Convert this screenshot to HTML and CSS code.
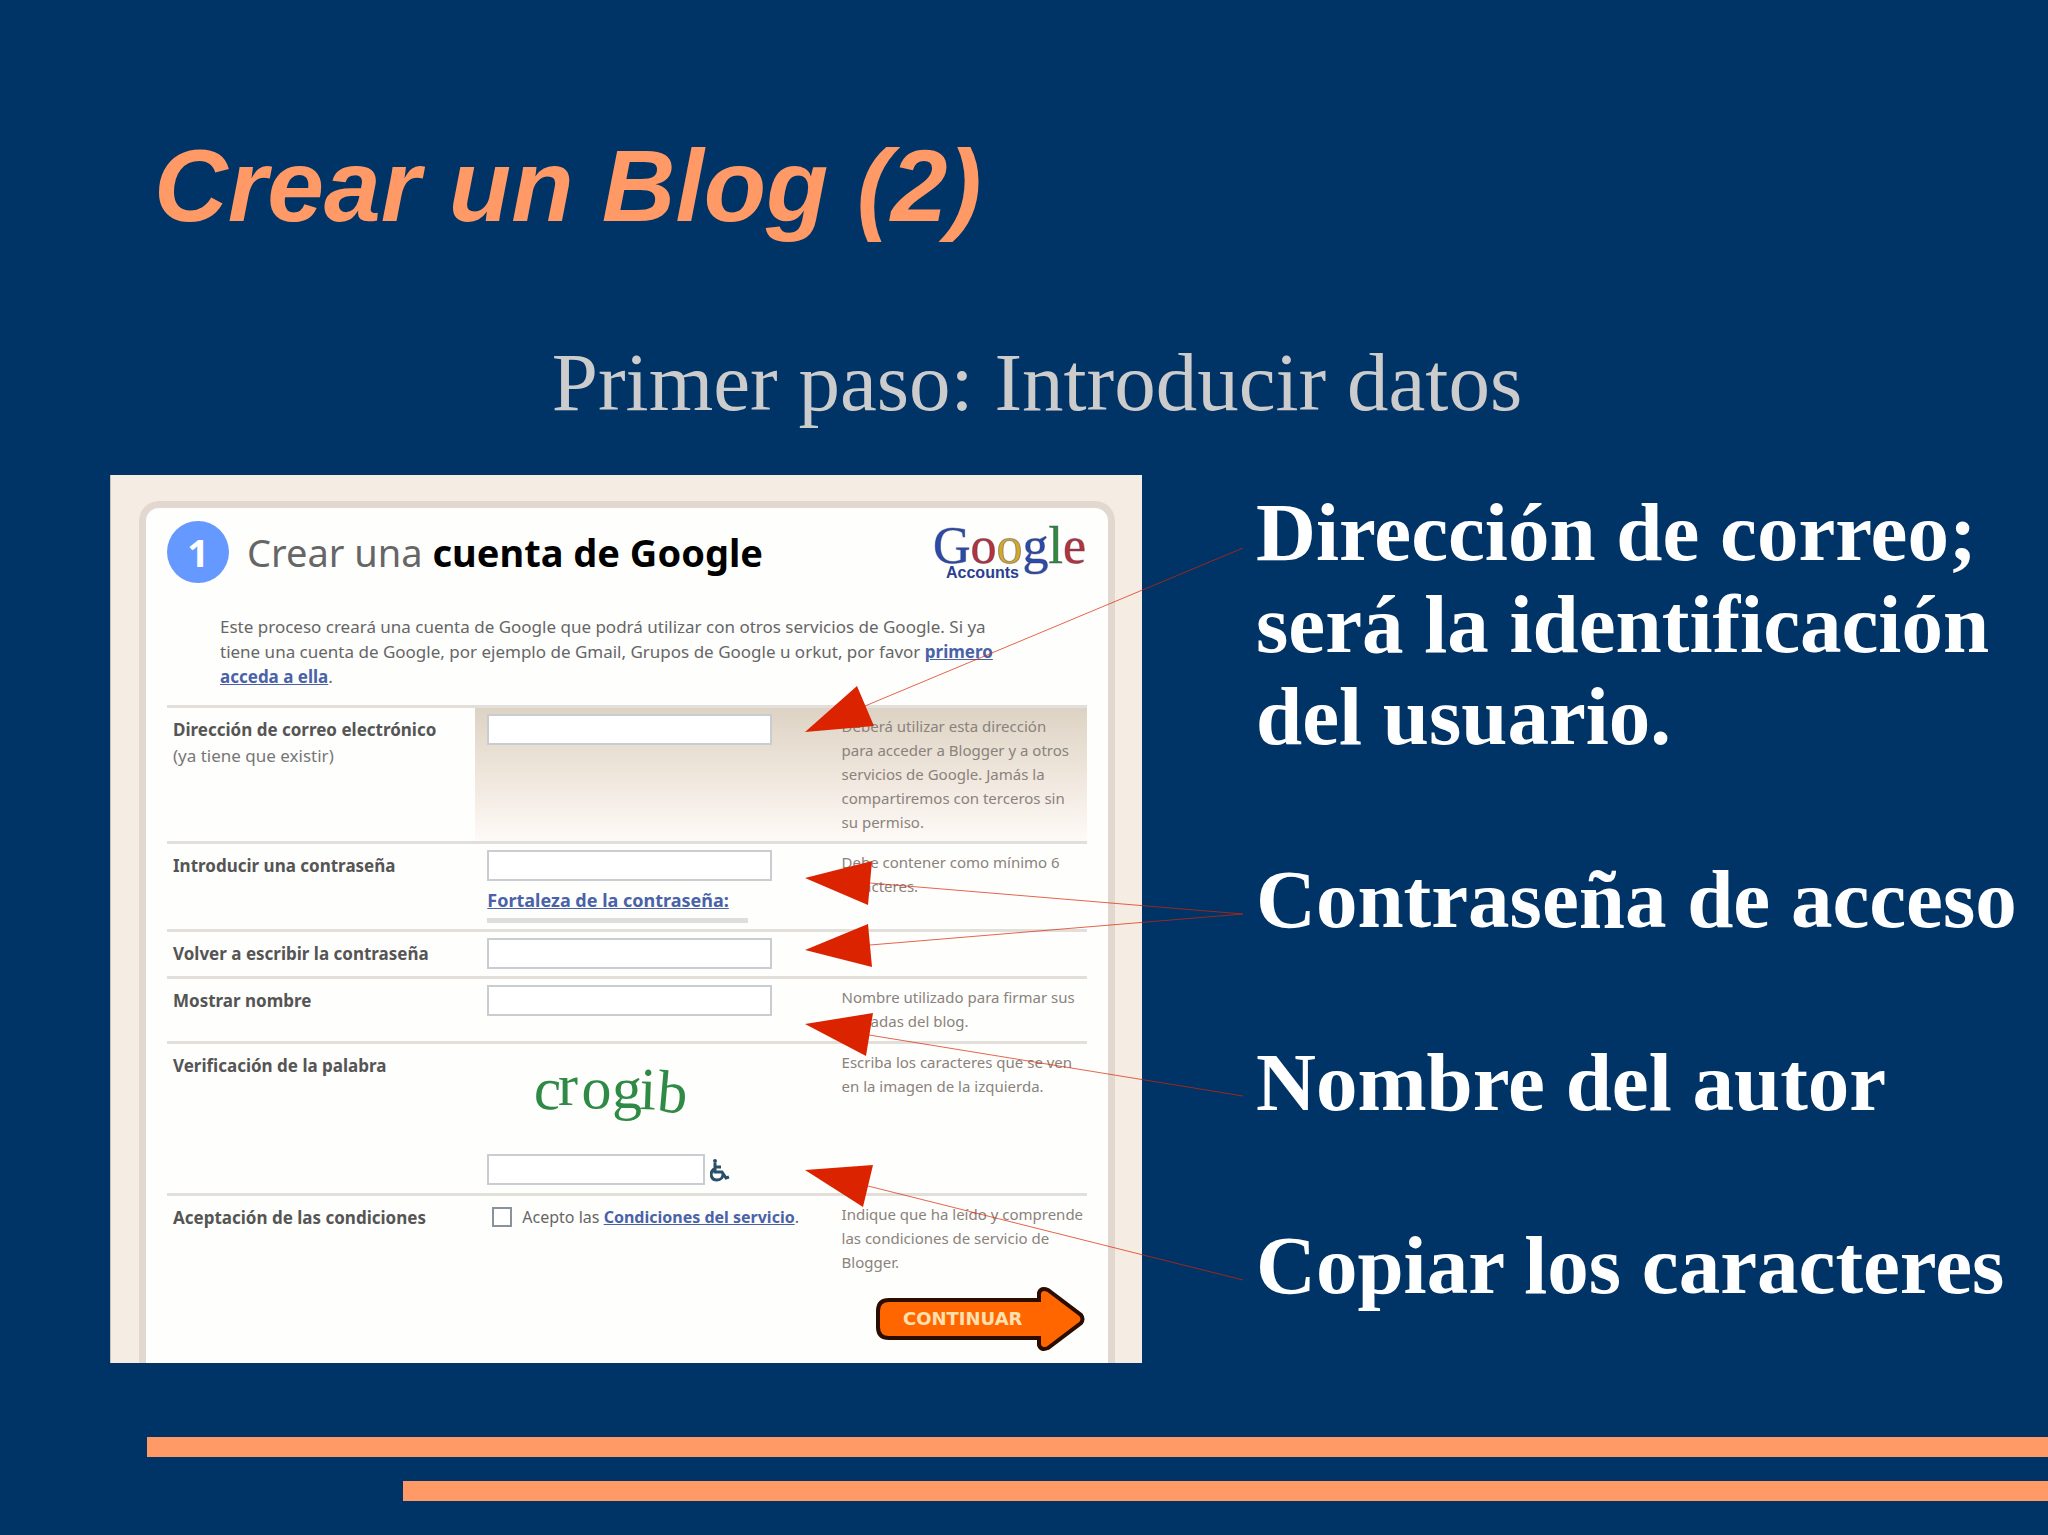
FILE: index.html
```
<!DOCTYPE html>
<html lang="es">
<head>
    <meta charset="UTF-8">
    <meta name="viewport" content="width=device-width, initial-scale=1.0">
    <title>Crear un Blog (2)</title>
    <link rel="stylesheet" href="styles.css">
</head>
<body>
    <main class="slide">
        <h1 class="slide-title">Crear un Blog (2)</h1>
        <p class="slide-subtitle">Primer paso: Introducir datos</p>

        <div class="content">
            <section class="signup">
                <form class="card">
                    <header class="card-header">
                        <span class="step">1</span>
                        <h2>Crear una <strong>cuenta de Google</strong></h2>
                        <svg class="logo" width="154" height="72" viewBox="0 0 154 72" role="img" aria-label="Google Accounts">
                            <text class="logo-name" x="0" y="42"><tspan fill="#2a4ba8">G</tspan><tspan fill="#b8323a">o</tspan><tspan fill="#d3a92c">o</tspan><tspan fill="#2a4ba8">g</tspan><tspan fill="#2f8a3c">l</tspan><tspan fill="#b8323a">e</tspan></text>
                            <text class="logo-sub" x="13" y="57">Accounts</text>
                        </svg>
                    </header>

                    <p class="intro">Este proceso creará una cuenta de Google que podrá utilizar con otros servicios de Google. Si ya<br>tiene una cuenta de Google, por ejemplo de Gmail, Grupos de Google u orkut, por favor <a href="#">primero<br>acceda a ella</a>.</p>

                    <div class="row row-email">
                        <div class="name"><label for="email">Dirección de correo electrónico</label><span>(ya tiene que existir)</span></div>
                        <div class="field"><input type="text" id="email"></div>
                        <p class="help">Deberá utilizar esta dirección<br>para acceder a Blogger y a otros<br>servicios de Google. Jamás la<br>compartiremos con terceros sin<br>su permiso.</p>
                    </div>
                    <div class="row row-password">
                        <div class="name"><label for="password">Introducir una contraseña</label></div>
                        <div class="field">
                            <input type="password" id="password">
                            <a class="strength" href="#">Fortaleza de la contraseña:</a>
                            <div class="meter"></div>
                        </div>
                        <p class="help">Debe contener como mínimo 6<br>caracteres.</p>
                    </div>
                    <div class="row row-repeat">
                        <div class="name"><label for="repeat">Volver a escribir la contraseña</label></div>
                        <div class="field"><input type="password" id="repeat"></div>
                    </div>
                    <div class="row row-nick">
                        <div class="name"><label for="nick">Mostrar nombre</label></div>
                        <div class="field"><input type="text" id="nick"></div>
                        <p class="help">Nombre utilizado para firmar sus<br>entradas del blog.</p>
                    </div>
                    <div class="row row-word">
                        <div class="name"><label for="word">Verificación de la palabra</label></div>
                        <div class="field">
                            <svg class="captcha" width="220" height="106" viewBox="0 0 220 106" role="img" aria-label="crogib">
                                <text x="46 71 94 125 152 169" y="60 57 60 60 61 63" rotate="4 0 2 0 2 5">crogib</text>
                            </svg>
                            <div class="word-line">
                                <input type="text" id="word">
                                <svg class="access" width="20" height="24" viewBox="0 0 20 24">
                                    <circle cx="5" cy="3" r="2"/>
                                    <path d="M5 5v9h7l4 6 3-1M5 9h6M4 11c-5 4-3 11 3 11 4 0 6-3 6-6"/>
                                </svg>
                            </div>
                        </div>
                        <p class="help">Escriba los caracteres que se ven<br>en la imagen de la izquierda.</p>
                    </div>
                    <div class="row row-terms">
                        <div class="name">Aceptación de las condiciones</div>
                        <div class="field terms">
                            <input type="checkbox" id="terms">
                            <label for="terms">Acepto las <a href="#">Condiciones del servicio</a>.</label>
                        </div>
                        <p class="help">Indique que ha leído y comprende<br>las condiciones de servicio de<br>Blogger.</p>
                    </div>

                    <button class="continue" type="button">
                        <svg width="212" height="64" viewBox="0 0 212 64">
                            <path d="M14 13H164V6Q166 0 173 3L206 28Q209 32 206 36L173 61Q166 64 164 58V51H14Q3 51 3 40V24Q3 13 14 13Z"/>
                            <text x="28" y="38">CONTINUAR</text>
                        </svg>
                    </button>
                </form>
            </section>

            <ul class="notes">
                <li>Dirección de correo;<br>será la identificación<br>del usuario.</li>
                <li>Contraseña de acceso</li>
                <li>Nombre del autor</li>
                <li>Copiar los caracteres</li>
            </ul>

            <!-- arrows from each note to its field -->
            <svg class="arrows" viewBox="0 0 1938 888" preserveAspectRatio="none">
                <path class="line" d="M755 231L1133 73M760 408L1133 439M760 470L1133 439M759 560L1133 621M758 711L1133 805"/>
                <path class="head" d="M695 257L747 211L764 251ZM695 403L762 386L758 430ZM695 475L758 449L762 492ZM695 549L763 538L756 581ZM695 695L763 690L753 732Z"/>
            </svg>
        </div>

        <div class="bars">
            <div class="bar"></div>
            <div class="bar bar-short"></div>
        </div>
    </main>
</body>
</html>
```
FILE: styles.css
```
* {
    box-sizing: border-box;
}
body {
    margin: 0;
    background-color: #003366;
    font-family: "Noto Sans", sans-serif;
}
h1, h2, p, ul {
    margin: 0;
    padding: 0;
}
.slide {
    min-height: 100vh;
    display: flex;
    flex-direction: column;
    overflow: hidden;
}
.slide-title {
    padding: 126px 0 0 154px;
    font: italic bold 102px/120px "Liberation Sans", Arial, sans-serif;
    color: #ff9966;
}
.slide-subtitle {
    padding: 88px 0 0 26px;
    text-align: center;
    font: 83px/96px "Liberation Serif", "Times New Roman", serif;
    color: #cccccc;
}
.content {
    position: relative;
    margin: 45px 0 0 110px;
    display: grid;
    grid-template-columns: 1032fr 906fr;
}
.signup {
    padding: 26px 27px 0 28px;
    background: #f5ece3;
    border-left: 1px solid #cbbfb8;
}
.card {
    height: 862px;
    padding: 13px 21px 0;
    display: flex;
    flex-direction: column;
    background: #fefefd;
    border: 7px solid #e2d8cf;
    border-bottom: 0;
    border-radius: 20px 20px 0 0;
    font-size: 17px;
    color: #666;
}
.card-header {
    display: flex;
    align-items: flex-start;
    height: 93px;
}
.step {
    width: 62px;
    height: 62px;
    margin-right: 18px;
    border-radius: 50%;
    background: #6699ff;
    color: #fff;
    font-size: 38px;
    font-weight: bold;
    line-height: 62px;
    text-align: center;
}
.card-header h2 {
    flex: 1;
    font-size: 38px;
    font-weight: normal;
    line-height: 62px;
    white-space: nowrap;
}
.card-header strong {
    color: #000;
}
.logo {
    overflow: visible;
}
.logo-name {
    font: 52px "Liberation Serif", serif;
}
.logo-name tspan {
    stroke: #33335a;
    stroke-opacity: 0.4;
}
.logo-sub {
    font: bold 16px "Liberation Sans", sans-serif;
    fill: #2a3f8f;
}
.intro {
    height: 91px;
    padding-left: 53px;
    font-size: 17px;
    line-height: 25px;
    white-space: nowrap;
}
a {
    color: #4a62a8;
    font-weight: bold;
}
.row {
    display: grid;
    grid-template-columns: 308fr 356fr 258fr;
    border-top: 3px solid #e2dfdb;
}
.row-email {
    height: 136px;
    background: linear-gradient(#ddd3c4, #efe6dc 50%, #fefaf7) right / calc(100% - 308px) 100% no-repeat;
}
.row-password {
    height: 88px;
}
.row-repeat {
    height: 47px;
}
.row-nick {
    height: 65px;
}
.row-word {
    height: 152px;
}
.row-terms {
    height: 94px;
}
.name {
    padding: 9px 0 0 6px;
    font-weight: bold;
    line-height: 26px;
    white-space: nowrap;
    color: #555;
}
.name span {
    display: block;
    font-weight: normal;
    color: #777;
}
.field {
    padding: 6px 0 0 13px;
    white-space: nowrap;
}
.field input[type="text"],
.field input[type="password"] {
    display: block;
    width: 285px;
    height: 31px;
    border: 2px solid #c9ccd0;
    background: #fff;
}
.strength {
    display: block;
    margin-top: 7px;
    font-size: 18px;
    line-height: 24px;
}
.meter {
    width: 261px;
    height: 5px;
    margin-top: 6px;
    background: #dedede;
}
.captcha {
    display: block;
}
.captcha text {
    font: 60px "Liberation Serif", serif;
    fill: #2f8a45;
}
.row-word .field {
    padding-top: 4px;
}
.word-line {
    display: flex;
    align-items: center;
    gap: 5px;
}
.field .word-line input {
    width: 218px;
}
.access circle {
    fill: #2a5068;
}
.access path {
    fill: none;
    stroke: #2a5068;
    stroke-width: 3;
}
.field.terms {
    display: flex;
    align-items: flex-start;
    padding: 8px 0 0 18px;
    font-size: 16px;
    line-height: 26px;
}
.terms input {
    appearance: none;
    width: 20px;
    height: 20px;
    margin: 3px 10px 0 0;
    border: 2px solid #8a939c;
    background: #fff;
}
.help {
    padding: 6px 0 0 12px;
    font-size: 15px;
    line-height: 24px;
    white-space: nowrap;
    color: #8a827b;
}
.continue {
    align-self: flex-end;
    padding: 0;
    border: 0;
    background: none;
}
.continue svg {
    display: block;
}
.continue path {
    fill: #ff6600;
    stroke: #2b0d00;
    stroke-width: 4;
}
.continue text {
    font: bold 18px "DejaVu Sans", sans-serif;
    fill: #ffe0b0;
}
.notes {
    padding: 11px 0 0 114px;
    list-style: none;
    display: flex;
    flex-direction: column;
    gap: 91px;
    font: bold 83px/92px "Liberation Serif", "Times New Roman", serif;
    color: #fff;
    white-space: nowrap;
}
.arrows {
    position: absolute;
    inset: 0;
    width: 100%;
    height: 100%;
    pointer-events: none;
}
.arrows .line {
    fill: none;
    stroke: #dc2300;
    stroke-opacity: 0.7;
}
.arrows .head {
    fill: #dc2300;
}
.bars {
    margin-top: 74px;
    display: flex;
    flex-direction: column;
    align-items: flex-end;
    gap: 24px;
}
.bar {
    width: calc(100% - 147px);
    height: 20px;
    background: #ff9966;
}
.bar-short {
    width: calc(100% - 403px);
}
```
